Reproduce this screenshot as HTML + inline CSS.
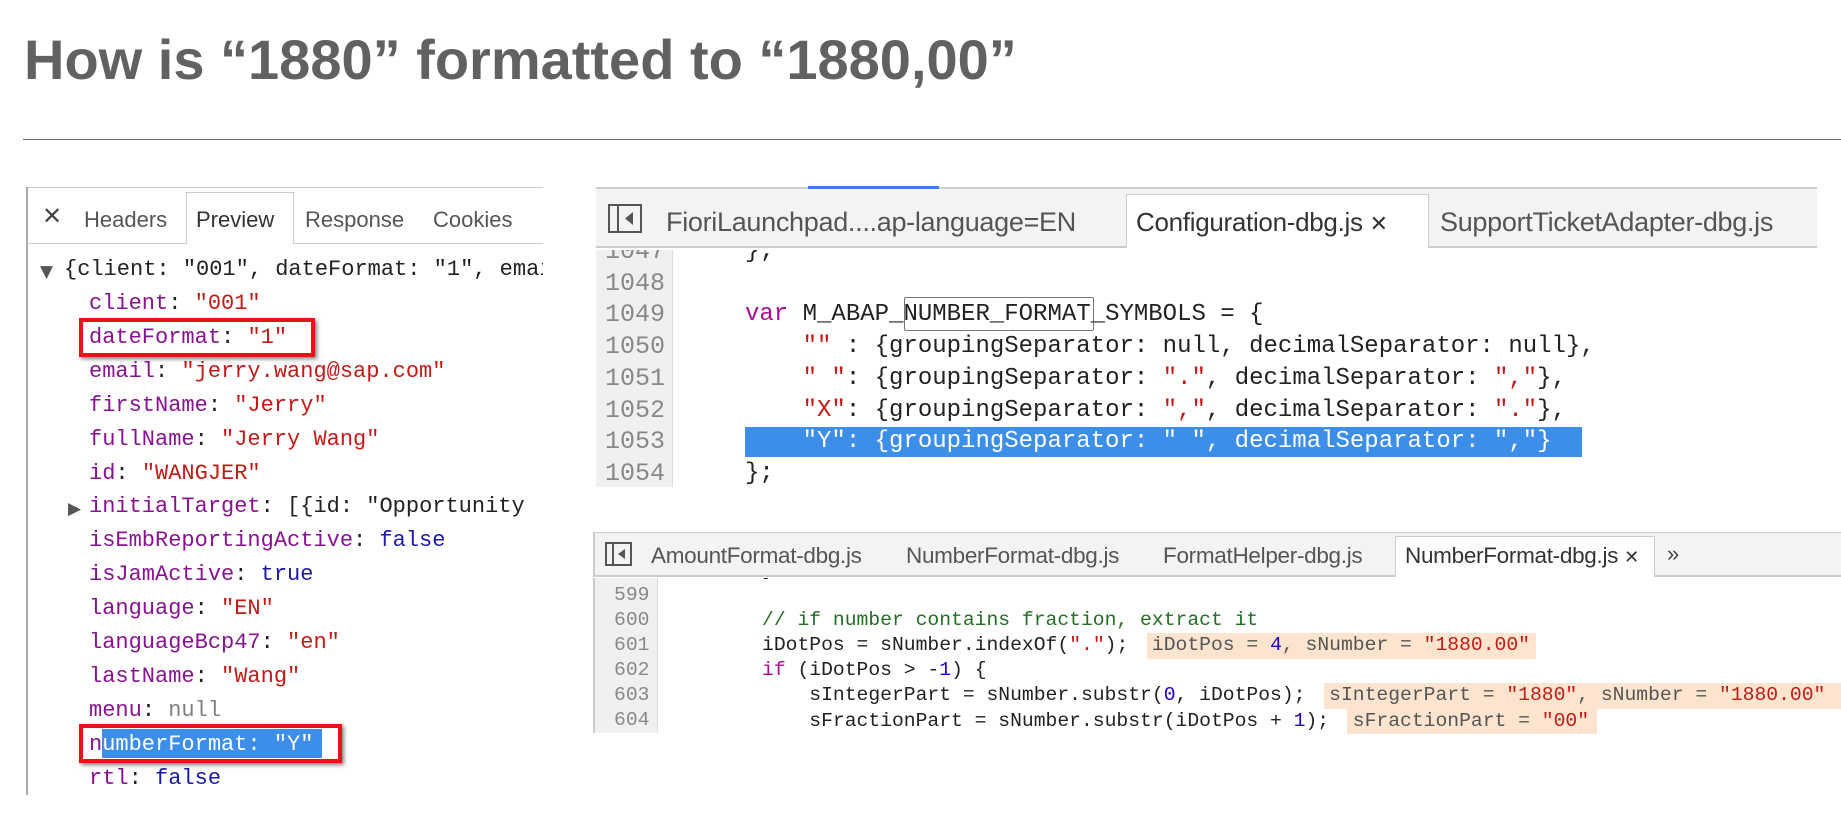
<!DOCTYPE html>
<html><head><meta charset="utf-8"><style>
*{margin:0;padding:0;box-sizing:border-box}
body{width:1841px;height:827px;background:#fff;position:relative;overflow:hidden;font-family:"Liberation Sans",sans-serif}
.a{position:absolute;white-space:pre}
.m{font-family:"Liberation Mono",monospace}
.k{color:#881391}.s{color:#c41a16}.b{color:#1a1aa6}.n{color:#808080}
.kw{color:#aa0d91}.cm{color:#236e25}.num{color:#1c00cf}
.t{position:absolute;left:89px;font-family:"Liberation Mono",monospace;font-size:22px;line-height:34px;color:#222;white-space:pre}
</style></head><body>
<div class="a" style="left:24px;top:28px;font-size:56px;font-weight:bold;color:#616161;line-height:64px">How is “1880” formatted to “1880,00”</div>
<div class="a" style="left:23px;top:139px;width:1818px;height:1px;background:#6a6a6a"></div>

<!-- left panel -->
<div class="a" style="left:27px;top:187px;width:516px;height:1px;background:#ccc"></div>
<div class="a" style="left:26px;top:187px;width:2px;height:608px;background:#aaa"></div>
<div class="a" style="left:27px;top:243px;width:516px;height:1px;background:#ccc"></div>
<div class="a" style="left:186px;top:192px;width:108px;height:52px;border:1px solid #ccc;border-bottom:none;background:#fff"></div>
<div class="a" style="left:42px;top:205px;font-size:24px;color:#444;line-height:24px">✕</div>
<div class="a" style="left:84px;top:206px;font-size:22px;color:#555;line-height:28px">Headers</div>
<div class="a" style="left:196px;top:206px;font-size:22px;color:#333;line-height:28px">Preview</div>
<div class="a" style="left:305px;top:206px;font-size:22px;color:#555;line-height:28px">Response</div>
<div class="a" style="left:433px;top:206px;width:110px;overflow:hidden;font-size:22px;color:#555;line-height:28px">Cookies</div>

<div class="a" style="left:79px;top:318px;width:236px;height:39px;border:4px solid #e8121b;box-shadow:2px 2px 4px rgba(0,0,0,.5)"></div>
<div class="a" style="left:102px;top:729px;width:220px;height:29px;background:#3d8ee8"></div>
<div class="a" style="left:79px;top:724px;width:263px;height:39px;border:4px solid #e8121b;box-shadow:2px 2px 4px rgba(0,0,0,.5)"></div>

<div class="a" style="left:0;top:253px;width:543px;height:560px;overflow:hidden">
<div class="a" style="left:40px;top:9px;color:#555;font-size:17px;font-family:'DejaVu Sans'">▼</div>
<div class="t" style="left:64px;top:0">{client: "001", dateFormat: "1", email</div>
<div class="t" style="top:34px"><span class="k">client</span>: <span class="s">"001"</span></div>
<div class="t" style="top:68px"><span class="k">dateFormat</span>: <span class="s">"1"</span></div>
<div class="t" style="top:102px"><span class="k">email</span>: <span class="s">"jerry.wang@sap.com"</span></div>
<div class="t" style="top:136px"><span class="k">firstName</span>: <span class="s">"Jerry"</span></div>
<div class="t" style="top:170px"><span class="k">fullName</span>: <span class="s">"Jerry Wang"</span></div>
<div class="t" style="top:204px"><span class="k">id</span>: <span class="s">"WANGJER"</span></div>
<div class="a" style="left:68px;top:246px;color:#555;font-size:17px;font-family:'DejaVu Sans'">▶</div>
<div class="t" style="top:237px"><span class="k">initialTarget</span>: [{id: "Opportunity</div>
<div class="t" style="top:271px"><span class="k">isEmbReportingActive</span>: <span class="b">false</span></div>
<div class="t" style="top:305px"><span class="k">isJamActive</span>: <span class="b">true</span></div>
<div class="t" style="top:339px"><span class="k">language</span>: <span class="s">"EN"</span></div>
<div class="t" style="top:373px"><span class="k">languageBcp47</span>: <span class="s">"en"</span></div>
<div class="t" style="top:407px"><span class="k">lastName</span>: <span class="s">"Wang"</span></div>
<div class="t" style="top:441px"><span class="k">menu</span>: <span class="n">null</span></div>
<div class="t" style="top:475px"><span class="k">n</span><span style="color:#fff">umberFormat: "Y"</span></div>
<div class="t" style="top:509px"><span class="k">rtl</span>: <span class="b">false</span></div>
</div>

<!-- right top panel -->
<div class="a" style="left:596px;top:187px;width:1221px;height:300px;background:#fff"></div>
<div class="a" style="left:596px;top:187px;width:1221px;height:61px;background:#f3f3f3;border-top:2px solid #ccc;border-bottom:2px solid #ccc"></div>
<div class="a" style="left:808px;top:186px;width:131px;height:3px;background:#3b7ded"></div>
<div class="a" style="left:1126px;top:194px;width:303px;height:54px;background:#fff;border:1px solid #ccc;border-bottom:none"></div>
<svg class="a" style="left:608px;top:204px" width="34" height="29"><rect x="1" y="1" width="32" height="27" fill="none" stroke="#555" stroke-width="2"/><line x1="10" y1="1" x2="10" y2="28" stroke="#555" stroke-width="2"/><path d="M25 8 L17 14.5 L25 21 Z" fill="#555"/></svg>
<div class="a" style="left:666px;top:206px;font-size:27px;color:#555;line-height:32px;letter-spacing:-.3px">FioriLaunchpad....ap-language=EN</div>
<div class="a" style="left:1136px;top:206px;font-size:26px;color:#333;line-height:32px;letter-spacing:-.3px">Configuration-dbg.js <span style="font-size:22px">✕</span></div>
<div class="a" style="left:1440px;top:206px;font-size:27px;color:#555;line-height:32px;letter-spacing:-.3px">SupportTicketAdapter-dbg.js</div>
<div class="a" style="left:596px;top:250px;width:77px;height:237px;background:#f0f0f0;border-right:1px solid #ddd"></div>
<div class="a" style="left:745px;top:427px;width:837px;height:30px;background:#3d8ee8"></div>
<div class="a" style="left:904px;top:297px;width:190px;height:34px;border:1.5px solid #777;border-radius:2px"></div>
<div class="a m" style="left:596px;top:250px;width:1221px;height:237px;overflow:hidden">
<div class="a m" style="left:9px;top:-14px;font-size:25px;line-height:31.7px;color:#888">1047
1048
1049
1050
1051
1052
1053
1054</div>
<div class="a m" style="left:149px;top:-14px;font-size:24px;line-height:31.7px;color:#222">};

<span class="kw">var</span> M_ABAP_NUMBER_FORMAT_SYMBOLS = {
    <span class="s">""</span> : {groupingSeparator: null, decimalSeparator: null},
    <span class="s">" "</span>: {groupingSeparator: <span class="s">"."</span>, decimalSeparator: <span class="s">","</span>},
    <span class="s">"X"</span>: {groupingSeparator: <span class="s">","</span>, decimalSeparator: <span class="s">"."</span>},
<span style="color:#fff">    "Y": {groupingSeparator: " ", decimalSeparator: ","}</span>
};</div></div>

<!-- right bottom panel -->
<div class="a" style="left:593px;top:532px;width:1248px;height:45px;background:#f3f3f3;border-top:1px solid #ccc;border-bottom:2px solid #ccc;border-left:2px solid #ccc"></div>
<div class="a" style="left:1395px;top:536px;width:260px;height:41px;background:#fff;border:1px solid #ccc;border-bottom:none"></div>
<svg class="a" style="left:605px;top:542px" width="27" height="24"><rect x="1" y="1" width="25" height="22" fill="none" stroke="#555" stroke-width="2"/><line x1="8" y1="1" x2="8" y2="23" stroke="#555" stroke-width="2"/><path d="M20 7 L13 12 L20 17 Z" fill="#555"/></svg>
<div class="a" style="left:651px;top:542px;font-size:22.5px;color:#555;line-height:28px;letter-spacing:-.3px">AmountFormat-dbg.js</div>
<div class="a" style="left:906px;top:542px;font-size:22.5px;color:#555;line-height:28px;letter-spacing:-.3px">NumberFormat-dbg.js</div>
<div class="a" style="left:1163px;top:542px;font-size:22.5px;color:#555;line-height:28px;letter-spacing:-.3px">FormatHelper-dbg.js</div>
<div class="a" style="left:1405px;top:542px;font-size:22.5px;color:#333;line-height:28px;letter-spacing:-.3px">NumberFormat-dbg.js <span style="font-size:18px">✕</span></div>
<div class="a" style="left:1667px;top:541px;font-size:22px;color:#444;line-height:26px">»</div>
<div class="a" style="left:593px;top:578px;width:2px;height:155px;background:#ccc"></div>
<div class="a" style="left:595px;top:578px;width:63px;height:155px;background:#f0f0f0;border-right:1px solid #ddd"></div>
<div class="a" style="left:1147px;top:633px;width:389px;height:26px;background:#fde4cf"></div>
<div class="a" style="left:1324px;top:683px;width:517px;height:26px;background:#fde4cf"></div>
<div class="a" style="left:1347px;top:708px;width:250px;height:26px;background:#fde4cf"></div>
<div class="a" style="left:595px;top:578px;width:1246px;height:155px;overflow:hidden">
<div class="a m" style="left:19px;top:5px;font-size:19.7px;line-height:25.1px;color:#888">599
600
601
602
603
604</div>
<div class="a m" style="left:167px;top:-20px;font-size:19.7px;line-height:25.1px;color:#222">}

<span class="cm">// if number contains fraction, extract it</span>
iDotPos = sNumber.indexOf(<span class="s">"."</span>);  <span style="color:#555">iDotPos = <span class="num">4</span>, sNumber = <span class="s">"1880.00"</span></span>
<span class="kw">if</span> (iDotPos &gt; -<span class="num">1</span>) {
    sIntegerPart = sNumber.substr(<span class="num">0</span>, iDotPos);  <span style="color:#555">sIntegerPart = <span class="s">"1880"</span>, sNumber = <span class="s">"1880.00"</span></span>
    sFractionPart = sNumber.substr(iDotPos + <span class="num">1</span>);  <span style="color:#555">sFractionPart = <span class="s">"00"</span></span></div></div>
</body></html>
